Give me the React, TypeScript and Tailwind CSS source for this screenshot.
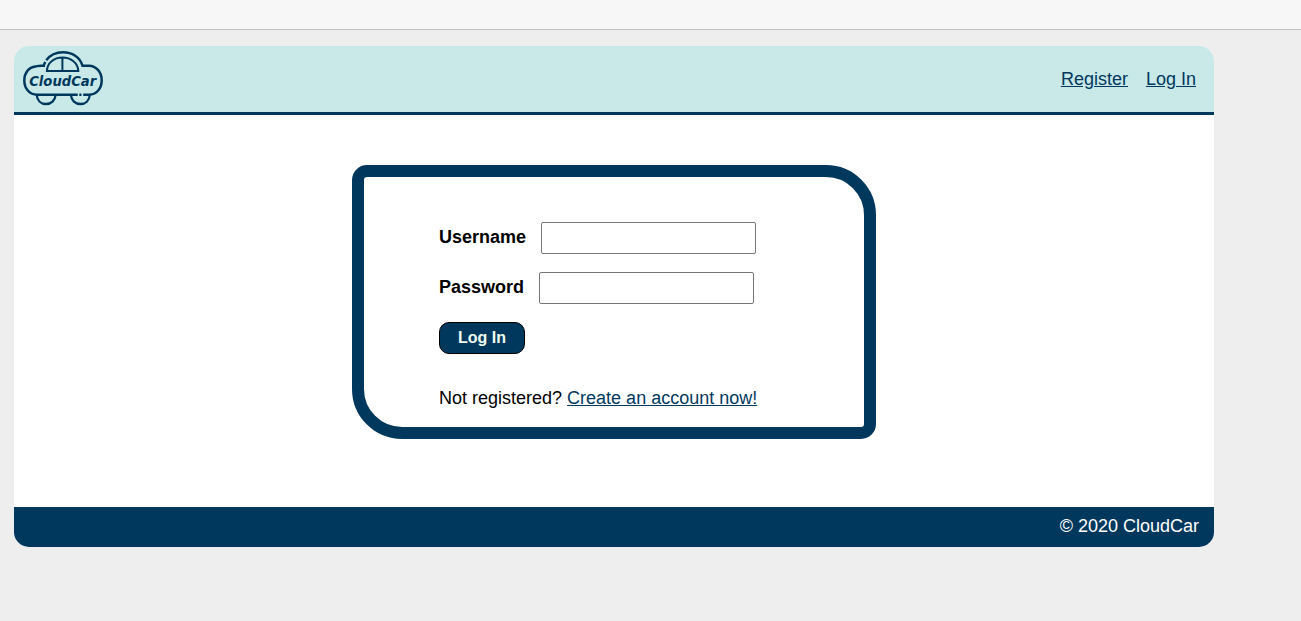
function Logo() {
  return (
    <svg
      className="block h-14 w-20 overflow-visible"
      viewBox="0 0 80 56"
      fill="none"
      stroke="#00385d"
      strokeWidth="2.5"
      role="img"
      aria-label="CloudCar"
    >
      <path d="M22 15.700H18C15.500 15.700 14.500 16.100 12.500 16.400C5.500 17.300 1.300 23 1.300 30.300C1.300 39 7 44.700 14 44.700H54.700" />
      <path d="M56.300 44.700H58.500M60.200 44.700H66C73 44.700 78.700 39 78.700 30.300C78.700 21.700 73 15.900 66 15.700H59.500C57 7 49 2.200 40 2.200C33 2.200 27 5.100 23.300 10.200" />
      <path d="M20.800 15.600C21.100 14.200 21.600 13.100 22.400 12" />
      <path strokeWidth="2" d="M23.900 20.900C24.200 13 31 7.600 39.400 7.600C48 7.600 54.900 13 55.300 20.900ZM39.400 7.600V20.900" />
      <path strokeWidth="2.300" d="M13.700 45C14.200 50.500 18 54 23.100 54C28.200 54 32.100 50.500 32.600 45M47.900 45C48.400 50.500 52.300 54 57.400 54C62.500 54 66.300 50.500 66.800 45" />
      <text
        x="6.200"
        y="36"
        textLength="67"
        lengthAdjust="spacingAndGlyphs"
        fill="#00385d"
        stroke="none"
        className="font-['DejaVu_Sans',sans-serif] text-[13.6px] font-bold italic"
      >
        CloudCar
      </text>
    </svg>
  );
}

function Field({ id, label, type }: { id: string; label: string; type: string }) {
  return (
    <div className="flex h-8 items-start">
      <label htmlFor={id} className="mr-[15px] pt-px font-bold leading-7">
        {label}
      </label>
      <input id={id} type={type} className="h-8 w-[215px] rounded-xs border border-[#767676] bg-white px-1 outline-none" />
    </div>
  );
}

export default function App() {
  return (
    <div className="min-h-screen bg-[#eeeeee] font-['Liberation_Sans',Arial,sans-serif] text-lg text-black">
      <div className="h-[30px] border-b border-[#c0c0c0] bg-[#f7f7f7]" />
      <div className="mt-4 ml-[14px] w-[1200px] overflow-hidden rounded-[15px] bg-white">
        <header className="flex h-[69px] items-start justify-between border-b-3 border-[#00385d] bg-[#c8e9e7] pt-1 pr-[18px] pl-[9px]">
          <Logo />
          <nav className="flex gap-[18px] pt-[15px] leading-7 text-[#00385d] underline">
            <a href="#register">Register</a>
            <a href="#login">Log In</a>
          </nav>
        </header>
        <main className="flex h-[392px] items-start justify-center pt-[50px]">
          <form className="flex h-[274px] w-[524px] flex-col items-start gap-[18px] rounded-[15px_50px_15px_50px] border-12 border-[#00385d] pt-[45px] pl-[75px]">
            <Field id="username" label="Username" type="text" />
            <Field id="password" label="Password" type="password" />
            <button type="button" className="h-8 w-[86px] rounded-[10px] border border-black bg-[#00385d] text-base leading-none font-bold text-[#f0fff0]">
              Log In
            </button>
            <p className="pt-3 leading-7">
              Not registered?{" "}
              <a href="#register" className="text-[#00385d] underline">Create an account now!</a>
            </p>
          </form>
        </main>
        <footer className="h-10 bg-[#00385d] pt-[5px] pr-[15px] text-right leading-7 text-white">
          © 2020 CloudCar
        </footer>
      </div>
    </div>
  );
}
